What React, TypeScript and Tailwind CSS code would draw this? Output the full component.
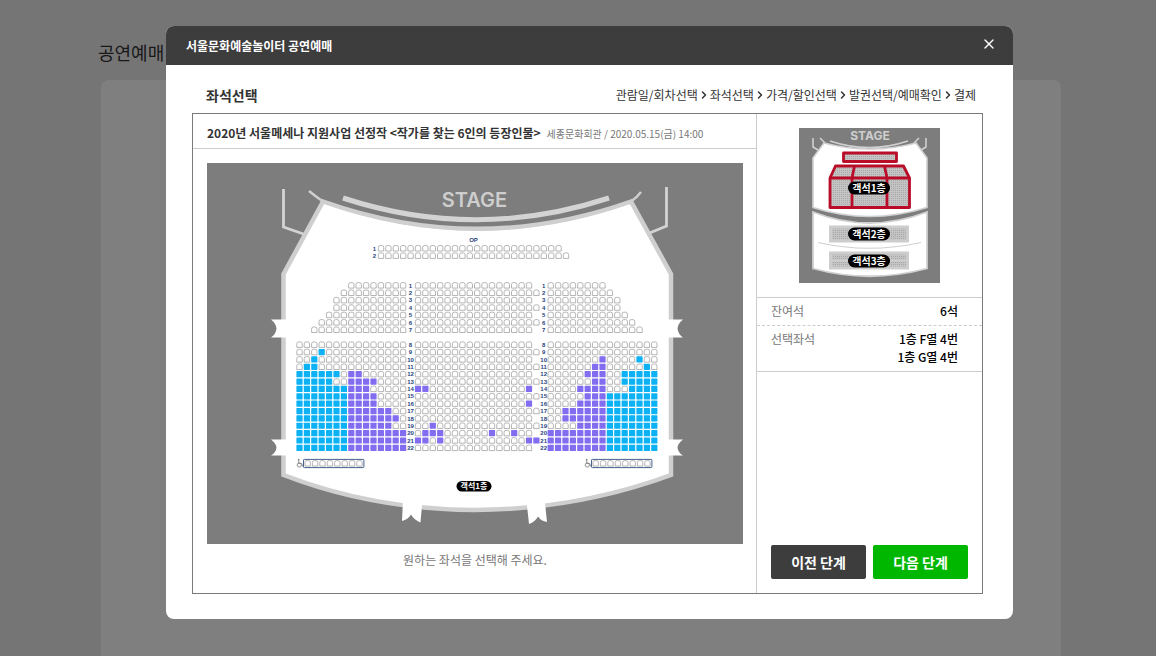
import { ChevronRight, X } from 'lucide-react';
import { Fragment } from 'react';

type Span = [number, number];

interface Row {
  no: number;
  left: { start: number; blue?: Span; purple?: Span };
  center: { count: number; purple?: number[] };
  right: { count: number; blue?: Span; purple?: Span };
}

const PITCH = 7.4;
const LEFT_X = 92.5;
const CENTER_X = 211;
const RIGHT_X = 343.7;

const BLUE = '#0db2f5';
const PURPLE = '#826cf0';

const rows: Row[] = [
  { no: 1, left: { start: 7 }, center: { count: 16 }, right: { count: 8 } },
  { no: 2, left: { start: 6 }, center: { count: 17 }, right: { count: 9 } },
  { no: 3, left: { start: 5 }, center: { count: 16 }, right: { count: 10 } },
  { no: 4, left: { start: 5 }, center: { count: 17 }, right: { count: 10 } },
  { no: 5, left: { start: 4 }, center: { count: 16 }, right: { count: 11 } },
  { no: 6, left: { start: 3 }, center: { count: 17 }, right: { count: 12 } },
  { no: 7, left: { start: 2 }, center: { count: 16 }, right: { count: 13 } },
  { no: 8, left: { start: 0 }, center: { count: 16 }, right: { count: 15 } },
  { no: 9, left: { start: 0, blue: [3, 3] }, center: { count: 17 }, right: { count: 15 } },
  { no: 10, left: { start: 0, blue: [2, 2] }, center: { count: 16 }, right: { count: 15, purple: [7, 7], blue: [12, 12] } },
  { no: 11, left: { start: 0, blue: [1, 2] }, center: { count: 17 }, right: { count: 15, purple: [6, 7], blue: [13, 13] } },
  { no: 12, left: { start: 0, blue: [0, 5], purple: [7, 8] }, center: { count: 16 }, right: { count: 15, purple: [5, 7], blue: [10, 14] } },
  { no: 13, left: { start: 0, blue: [0, 4], purple: [7, 10] }, center: { count: 17 }, right: { count: 15, purple: [6, 7], blue: [10, 14] } },
  { no: 14, left: { start: 0, blue: [0, 6], purple: [7, 9] }, center: { count: 16, purple: [0, 1, 15] }, right: { count: 15, purple: [4, 7], blue: [11, 14] } },
  { no: 15, left: { start: 0, blue: [0, 6], purple: [7, 10] }, center: { count: 17 }, right: { count: 15, purple: [5, 7], blue: [8, 14] } },
  { no: 16, left: { start: 0, blue: [0, 6], purple: [7, 10] }, center: { count: 16, purple: [15] }, right: { count: 15, purple: [4, 7], blue: [8, 14] } },
  { no: 17, left: { start: 0, blue: [0, 6], purple: [7, 12] }, center: { count: 17 }, right: { count: 15, purple: [2, 7], blue: [8, 14] } },
  { no: 18, left: { start: 0, blue: [0, 6], purple: [7, 13] }, center: { count: 16 }, right: { count: 15, purple: [2, 7], blue: [8, 14] } },
  { no: 19, left: { start: 0, blue: [0, 6], purple: [7, 12] }, center: { count: 17, purple: [2] }, right: { count: 15, purple: [4, 7], blue: [8, 14] } },
  { no: 20, left: { start: 0, blue: [0, 6], purple: [7, 14] }, center: { count: 16, purple: [1, 2, 3, 10, 13] }, right: { count: 15, purple: [0, 7], blue: [8, 14] } },
  { no: 21, left: { start: 0, blue: [0, 6], purple: [7, 14] }, center: { count: 17, purple: [0, 1, 3, 15, 16] }, right: { count: 15, purple: [0, 7], blue: [8, 14] } },
  { no: 22, left: { start: 0, blue: [0, 6], purple: [7, 14] }, center: { count: 16 }, right: { count: 15, purple: [0, 7], blue: [8, 14] } },
];

const steps = ['관람일/회차선택', '좌석선택', '가격/할인선택', '발권선택/예매확인', '결제'];

const selectedSeats = ['1층 F열 4번', '1층 G열 4번'];

const rowY = (no: number) => (no < 8 ? 122.4 + (no - 1) * PITCH : 181.7 + (no - 8) * 7.37);

const inSpan = (i: number, span?: Span) => !!span && i >= span[0] && i <= span[1];

const Seat = ({ x, y, color }: { x: number; y: number; color?: string }) =>
  color ? (
    <rect x={x - 3.1} y={y - 3.1} width={6.2} height={6.2} rx={0.6} fill={color} />
  ) : (
    <path
      d={`M${x - 2.7} ${y + 2.7}v-3.6q0-1.9 1.9-1.9h1.6q1.9 0 1.9 1.9v3.6z`}
      fill="#fff"
      stroke="#a3a3a3"
      strokeWidth={0.8}
    />
  );

const RowLabel = ({ x, y, children }: { x: number; y: number; children: number | string }) => (
  <text
    x={x}
    y={y + 2.2}
    textAnchor="middle"
    fontSize={6}
    fontWeight={700}
    fill="#27437c"
    className="font-['Liberation_Sans',sans-serif]"
  >
    {children}
  </text>
);

const SeatRow = ({ row }: { row: Row }) => {
  const y = rowY(row.no);
  const { left, center, right } = row;

  return (
    <g>
      {Array.from({ length: 15 - left.start }, (_, n) => {
        const i = n + left.start;
        const color = inSpan(i, left.blue) ? BLUE : inSpan(i, left.purple) ? PURPLE : undefined;
        return <Seat key={i} x={LEFT_X + i * PITCH} y={y} color={color} />;
      })}
      <RowLabel x={203.5} y={y}>{row.no}</RowLabel>
      {Array.from({ length: center.count }, (_, i) => (
        <Seat key={i} x={CENTER_X + i * PITCH} y={y} color={center.purple?.includes(i) ? PURPLE : undefined} />
      ))}
      <RowLabel x={336.7} y={y}>{row.no}</RowLabel>
      {Array.from({ length: right.count }, (_, i) => {
        const color = inSpan(i, right.blue) ? BLUE : inSpan(i, right.purple) ? PURPLE : undefined;
        return <Seat key={i} x={RIGHT_X + i * PITCH} y={y} color={color} />;
      })}
    </g>
  );
};

const WheelchairRow = ({ x }: { x: number }) => (
  <g>
    <g fill="none" stroke="#777" strokeWidth={0.8}>
      <circle cx={x - 4.2} cy={302} r={2.1} />
      <path d={`M${x - 4.8} 297v3.4h2.8l1.3 3h1`} />
    </g>
    <circle cx={x - 4.8} cy={296.6} r={0.8} fill="#777" />
    <rect x={x} y={296.4} width={60.4} height={8.2} rx={0.8} fill="#fff" stroke="#45608f" strokeWidth={1} />
    {Array.from({ length: 8 }, (_, i) => (
      <Seat key={i} x={x + 4.2 + i * PITCH} y={300.4} />
    ))}
  </g>
);

const SeatMap = () => (
  <svg viewBox="0 0 536 381" className="block w-full bg-[#7d7d7d]" role="img" aria-label="객석1층">
    {/* Hall outline */}
    <path
      d="M116 38.5L76.5 111V312Q166 346.5 268 347Q370 346.5 464 312V111L424 38.5Q270 93 116 38.5Z"
      fill="#fff"
      stroke="#cfcfcf"
      strokeWidth={4.5}
    />
    <path d="M102 28q6 5 14 10.5Q270 94 424 38.5q6-4 10-9.5" fill="none" stroke="#cfcfcf" strokeWidth={2.4} />
    <path d="M136 35Q269 78.5 402 35" fill="none" stroke="#d3d3d3" strokeWidth={5} />
    <path d="M76.5 26v38l20 7M459.5 24v39l-17 7" fill="none" stroke="#d3d3d3" strokeWidth={2.8} />

    {/* Exits */}
    <g fill="#fff">
      <path d="M64 156.500h17v18H64q5-3.500 5.500-9-.5-5-5.500-9z" />
      <path d="M64 276.500h17v16H64q5-3 5.500-8-.5-4-5.500-8z" />
      <path d="M476 156.500h-17v18h17q-5-3.500-5.500-9 .5-5 5.500-9z" />
      <path d="M476 276.500h-17v16h17q-5-3-5.500-8 .5-4 5.500-8z" />
      <path d="M196 336l-1 22q6-1.500 9-6.500 3 5.500 9.500 8l2-23z" />
      <path d="M319.500 338l2.500 23q6-2 9-7.500 3 4.500 9 5.500l-2.500-24z" />
    </g>

    <text
      x={267.5}
      y={43.5}
      textAnchor="middle"
      fontSize={20}
      fontWeight={600}
      fill="#cecece"
      className="font-[Inter,sans-serif]"
    >
      STAGE
    </text>
    <RowLabel x={266.5} y={77}>OP</RowLabel>

    {[25, 26].map((count, r) => (
      <g key={count}>
        <RowLabel x={167.5} y={85.3 + r * PITCH}>{r + 1}</RowLabel>
        {Array.from({ length: count }, (_, i) => (
          <Seat key={i} x={174 + i * PITCH} y={85.3 + r * PITCH} />
        ))}
      </g>
    ))}

    {rows.map((row) => (
      <SeatRow key={row.no} row={row} />
    ))}

    <WheelchairRow x={96.5} />
    <WheelchairRow x={384.5} />

    <rect x={249.5} y={318} width={35} height={10.5} rx={5.25} fill="#000" />
    <text x={267} y={326.3} textAnchor="middle" fontSize={8} fontWeight={700} fill="#fff">객석1층</text>
  </svg>
);

const MiniMap = () => (
  <svg viewBox="0 0 141 155" className="block w-[141px] bg-[#7d7d7d]" role="img" aria-label="층별 안내">
    <defs>
      <pattern id="seats" width={2} height={2} patternUnits="userSpaceOnUse">
        <rect width={2} height={2} fill="#c4c4c4" />
        <rect width={1} height={1} fill="#a8a8a8" />
      </pattern>
    </defs>

    {/* First floor */}
    <path
      d="M25 15L14 30V79.5Q70 97.5 128 79.5V30L117 15Q71 27 25 15Z"
      fill="#fff"
      stroke="#d0d0d0"
      strokeWidth={1.6}
    />
    <path
      d="M31 13Q70 26 109 13M21 10l5 5M120 10l-5 5M14 10v9l5 3M127 10v9l-5 3"
      fill="none"
      stroke="#d0d0d0"
      strokeWidth={1.6}
    />
    <text
      x={71}
      y={12}
      textAnchor="middle"
      fontSize={12}
      fontWeight={700}
      fill="#cecece"
      className="font-[Inter,sans-serif]"
    >
      STAGE
    </text>
    <g fill="url(#seats)" stroke="#b80c28" strokeWidth={2.8} strokeLinejoin="round">
      <rect x={44.5} y={25} width={53} height={8.5} />
      <path d="M36.500 38h68l6 12v29.500h-79.500v-29.500z" />
      <path d="M31 50h79.500M55.500 38l-2.500 12v29.500M85.500 38l2.500 12v29.500" fill="none" />
    </g>

    {/* Second and third floors */}
    <path
      d="M14 84Q70 106 128 84V140.500Q70 156 14 140.500Z"
      fill="#fff"
      stroke="#d0d0d0"
      strokeWidth={1.8}
    />
    <path d="M19 114.500Q70 126 122 114.500" fill="none" stroke="#d0d0d0" strokeWidth={1.2} />
    <g fill="url(#seats)" stroke="#cdcdcd" strokeWidth={3}>
      <rect x={31.5} y={99} width={77} height={14} />
      <rect x={31.5} y={125} width={77} height={15} />
    </g>
    <path d="M32 132.500h76" stroke="#cdcdcd" strokeWidth={2} />

    {[60, 106, 133].map((y, i) => (
      <g key={y}>
        <rect x={49} y={y - 6.5} width={42} height={13} rx={6.5} fill="#000" />
        <text x={70} y={y + 3.6} textAnchor="middle" fontSize={10} fontWeight={700} fill="#fff">
          {`객석${i + 1}층`}
        </text>
      </g>
    ))}
  </svg>
);

const BookingDialog = () => (
  <section role="dialog" aria-labelledby="dialog-title" className="flex-1 overflow-hidden rounded-lg bg-white">
    <header className="flex h-[39px] items-center justify-between bg-[#3d3d3d] pl-5 pr-4 text-white">
      <h2 id="dialog-title" className="text-[12px] font-bold">서울문화예술놀이터 공연예매</h2>
      <button type="button" aria-label="닫기" className="mb-1 cursor-pointer">
        <X className="size-4" strokeWidth={2} />
      </button>
    </header>

    <div className="pt-4 pr-[30px] pb-[25px] pl-[26px]">
      <div className="flex h-8 items-center justify-between pb-1 pr-[7px] pl-[14px] text-[#333]">
        <h3 className="text-[14px] font-bold">좌석선택</h3>
        <ol className="flex items-center text-[12px]">
          {steps.map((step, index) => (
            <Fragment key={step}>
              {index > 0 && <li aria-hidden="true"><ChevronRight className="size-3" strokeWidth={3} /></li>}
              <li>{step}</li>
            </Fragment>
          ))}
        </ol>
      </div>

      <div className="flex border border-[#7a7a7a]">
        {/* Seat selection */}
        <div className="min-w-0 flex-1 border-r border-[#ccc]">
          <div className="flex h-[35px] items-center gap-1.5 border-b border-[#ccc] px-[14px] pt-1">
            <h4 className="text-[12px] font-bold text-[#333]">
              2020년 서울메세나 지원사업 선정작 &lt;작가를 찾는 6인의 등장인물&gt;
            </h4>
            <p className="text-[10px] text-[#777]">세종문화회관 / 2020.05.15(금) 14:00</p>
          </div>
          <div className="pt-[14px] pr-[13px] pb-[17px] pl-[14px]">
            <SeatMap />
            <p className="py-2 text-center text-[12px] leading-4 text-[#777]">원하는 좌석을 선택해 주세요.</p>
          </div>
        </div>

        {/* Summary */}
        <div className="flex w-[225px] flex-col text-[12px]">
          <div className="flex justify-center pt-[14px] pb-[14px]">
            <MiniMap />
          </div>
          <dl className="border-y border-[#ccc] leading-[18px]">
            <div className="flex justify-between border-b border-dashed border-[#ccc] pt-1 pr-6 pb-[5px] pl-[14px]">
              <dt className="text-[#777]">잔여석</dt>
              <dd className="font-medium text-black">6석</dd>
            </div>
            <div className="flex justify-between pt-1 pr-6 pb-[5px] pl-[14px]">
              <dt className="text-[#777]">선택좌석</dt>
              <dd className="text-right font-medium text-black">
                {selectedSeats.map((seat) => (
                  <p key={seat}>{seat}</p>
                ))}
              </dd>
            </div>
          </dl>
          <div className="mt-auto flex gap-[7px] p-[14px] text-[14px] font-bold text-white">
            <button type="button" className="h-[34px] flex-1 cursor-pointer rounded-xs bg-[#3d3d3d]">이전 단계</button>
            <button type="button" className="h-[34px] flex-1 cursor-pointer rounded-xs bg-[#00b700]">다음 단계</button>
          </div>
        </div>
      </div>
    </div>
  </section>
);

const App = () => (
  <div className="relative h-screen overflow-hidden bg-[#ebebeb] font-['Noto_Sans_CJK_KR',sans-serif]">
    <main className="flex h-full flex-col pt-[39px] pr-[95px] pl-[98px]">
      <h1 className="text-[18px] leading-[27px] text-[#333]">공연예매</h1>
      <div className="mt-[14px] ml-[3px] flex-1 rounded-t-lg bg-white" />
    </main>

    <div className="absolute inset-0 flex items-start bg-black/50 pt-[26px] pr-[143px] pl-[166px]">
      <BookingDialog />
    </div>
  </div>
);

export default App;
